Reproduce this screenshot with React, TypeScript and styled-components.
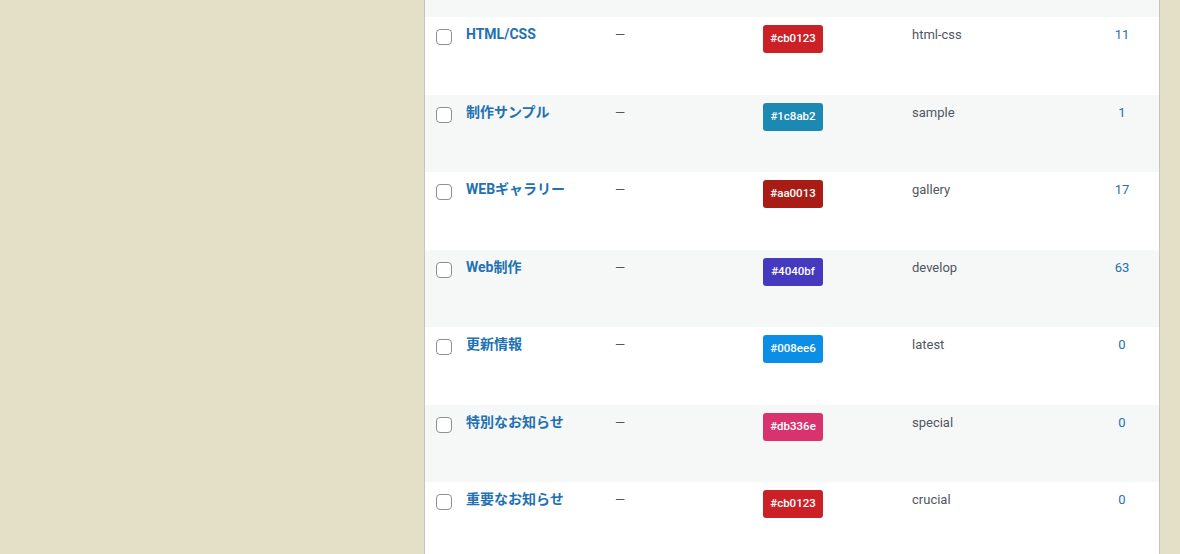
import styled, { createGlobalStyle } from "styled-components"

const GlobalStyle = createGlobalStyle`
  html, body {
    margin: 0;
    padding: 0;
    background: #e4dfc7;
    font-family: Roboto, "Noto Sans CJK JP", sans-serif;
    -webkit-font-smoothing: antialiased;
  }
`

const Page = styled.div`
  display: flex;
  height: 554px;
  overflow: hidden;
`

const Panel = styled.div`
  margin-left: 424px;
  width: 734px;
  border-left: 1px solid #c3c4c7;
  border-right: 1px solid #c3c4c7;
  background: #fff;
  display: flex;
  flex-direction: column;
`

const TopStripe = styled.div`
  height: 17px;
  background: #f6f7f7;
  flex-shrink: 0;
`

const Row = styled.div<{ $striped: boolean }>`
  display: grid;
  grid-template-columns: 31px 149px 148px 149px 1fr 74px;
  height: 77.5px;
  flex-shrink: 0;
  background: ${p => (p.$striped ? "#f6f7f7" : "#fff")};
`

const Cell = styled.div`
  padding: 8px 10px;
  font-size: 13px;
  line-height: 1.5;
  color: #50575e;
`

const CheckCell = styled.div`
  padding: 12px 0 0 11px;
`

const Check = styled.span`
  display: block;
  width: 16px;
  height: 16px;
  box-sizing: border-box;
  border: 1px solid #8c8f94;
  border-radius: 4px;
  background: #fff;
`

const Title = styled.a`
  display: block;
  font-size: 14px;
  font-weight: 700;
  color: #2271b1;
  line-height: 1.4;
  text-decoration: none;
`

const Badge = styled.span<{ $bg: string }>`
  display: inline-flex;
  align-items: center;
  justify-content: center;
  width: 60px;
  height: 28px;
  border-radius: 3px;
  background: ${p => p.$bg};
  color: #fff;
  font-size: 11.5px;
  font-weight: 500;
`

const CountCell = styled(Cell)`
  text-align: center;
  color: #2271b1;
`

// label is the stored colour value; bg is how it shows on screen
const rows = [
  { name: "HTML/CSS", label: "#cb0123", bg: "#cb2026", slug: "html-css", count: 11 },
  { name: "制作サンプル", label: "#1c8ab2", bg: "#1c89b3", slug: "sample", count: 1 },
  { name: "WEBギャラリー", label: "#aa0013", bg: "#a91c16", slug: "gallery", count: 17 },
  { name: "Web制作", label: "#4040bf", bg: "#4439bf", slug: "develop", count: 63 },
  { name: "更新情報", label: "#008ee6", bg: "#0b8ee6", slug: "latest", count: 0 },
  { name: "特別なお知らせ", label: "#db336e", bg: "#d9336d", slug: "special", count: 0 },
  { name: "重要なお知らせ", label: "#cb0123", bg: "#cb2026", slug: "crucial", count: 0 },
]

export default function App() {
  return (
    <Page>
      <GlobalStyle />
      <Panel>
        <TopStripe />
        {rows.map((r, i) => (
          <Row key={r.slug} $striped={i % 2 === 1}>
            <CheckCell>
              <Check />
            </CheckCell>
            <Cell>
              <Title>{r.name}</Title>
            </Cell>
            <Cell>—</Cell>
            <Cell>
              <Badge $bg={r.bg}>{r.label}</Badge>
            </Cell>
            <Cell>{r.slug}</Cell>
            <CountCell>{r.count}</CountCell>
          </Row>
        ))}
      </Panel>
    </Page>
  )
}
